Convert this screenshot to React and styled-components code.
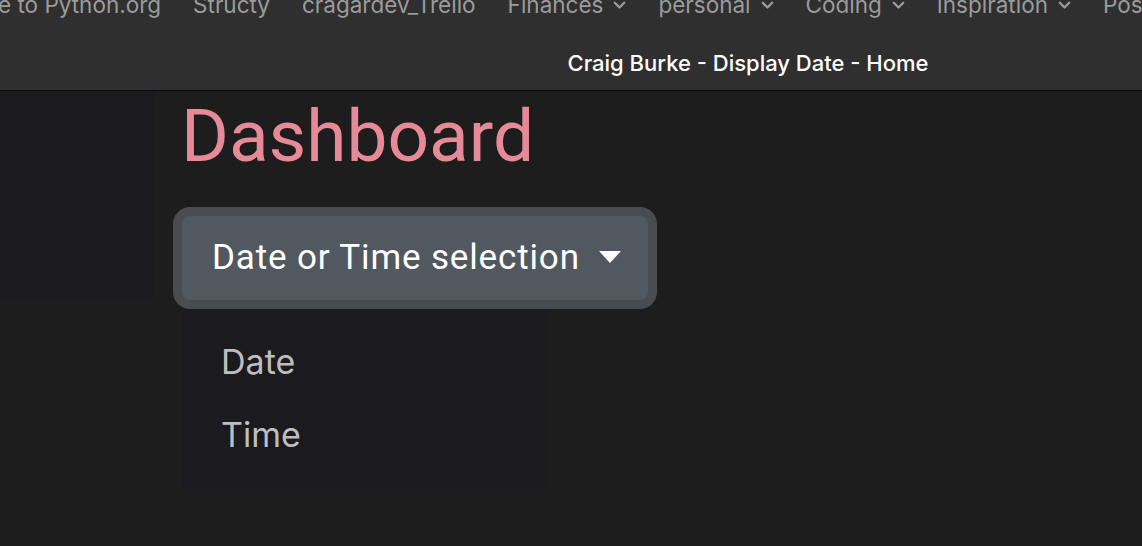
import styled, { createGlobalStyle } from "styled-components";

const GlobalStyle = createGlobalStyle`
  html, body {
    margin: 0;
    padding: 0;
    background: #1d1d1d;
    overflow: hidden;
  }
  * { box-sizing: border-box; }
`;

const Page = styled.div`
  width: 1142px;
  height: 546px;
  background: #1d1d1d;
  overflow: hidden;
`;

const Chrome = styled.header`
  height: 91px;
  background: #2f2f2f;
  border-bottom: 1px solid #0c0c0c;
  overflow: hidden;
`;

const Bookmarks = styled.nav`
  display: flex;
  align-items: center;
  gap: 32px;
  margin-top: -9px;
  margin-left: -2px;
  height: 27px;
  white-space: nowrap;
  font-family: Inter, "Noto Sans", sans-serif;
  font-size: 22.5px;
  line-height: 27px;
  color: #9b9b9b;
`;

const Bookmark = styled.span`
  display: flex;
  align-items: center;
  gap: 10px;
`;

const Chevron = styled.svg`
  width: 13px;
  height: 9px;
  margin-top: 1px;
`;

const TitleRow = styled.div`
  display: flex;
  justify-content: center;
  padding-left: 354px;
  margin-top: 32px;
  font-family: Inter, "Noto Sans", sans-serif;
  font-size: 22px;
  font-weight: 500;
  line-height: 26px;
  color: #ffffff;
`;

const Body = styled.div`
  display: flex;
  align-items: flex-start;
`;

const Sidebar = styled.aside`
  width: 154px;
  height: 209px;
  flex-shrink: 0;
  background: #1b1b1f;
`;

const Main = styled.main`
  padding-left: 28px;
  font-family: Roboto, "Liberation Sans", sans-serif;
`;

const Heading = styled.h1`
  margin: 9px 0 0 -1px;
  font-size: 73px;
  font-weight: 400;
  line-height: 73px;
  color: #e68a97;
`;

const DropdownWrap = styled.div`
  position: relative;
  z-index: 0;
  margin-top: 43px;
`;

const Toggle = styled.button`
  position: relative;
  z-index: 2;
  display: flex;
  align-items: center;
  gap: 19px;
  height: 84px;
  width: 466px;
  padding: 0 29px 0 30px;
  border: none;
  border-radius: 8px;
  background: #525860;
  box-shadow: 0 0 0 9px #494c51;
  color: #ffffff;
  font-family: Roboto, "Liberation Sans", sans-serif;
  font-size: 35px;
  letter-spacing: 0.85px;
  line-height: 40px;
  white-space: nowrap;
`;

const Caret = styled.span`
  width: 0;
  height: 0;
  margin-left: auto;
  margin-top: -2px;
  border-top: 12px solid #ffffff;
  border-left: 11px solid transparent;
  border-right: 11px solid transparent;
`;

const Menu = styled.ul`
  position: absolute;
  top: 91px;
  left: 0;
  z-index: 1;
  width: 366px;
  margin: 0;
  padding: 18px 0;
  list-style: none;
  background: #1b1b1f;
  border-radius: 8px;
`;

const MenuItem = styled.li`
  padding-left: 39px;
  font-family: Inter, "Noto Sans", sans-serif;
  font-size: 34px;
  line-height: 73px;
  color: #bebebe;
`;

const bookmarks = [
  { label: "e to Python.org" },
  { label: "Structy" },
  { label: "cragardev_Trello" },
  { label: "Finances", menu: true },
  { label: "personal", menu: true },
  { label: "Coding", menu: true },
  { label: "Inspiration", menu: true },
  { label: "Posts" },
];

const App = () => {
  return (
    <Page>
      <GlobalStyle />
      <Chrome>
        <Bookmarks>
          {bookmarks.map((b) => (
            <Bookmark key={b.label}>
              {b.label}
              {b.menu && (
                <Chevron viewBox="0 0 13 9">
                  <path d="M1.8 1.8 L6.5 6.5 L11.2 1.8" fill="none" stroke="#9b9b9b" strokeWidth="2.3" strokeLinecap="round" strokeLinejoin="round" />
                </Chevron>
              )}
            </Bookmark>
          ))}
        </Bookmarks>
        <TitleRow>Craig Burke - Display Date - Home</TitleRow>
      </Chrome>
      <Body>
        <Sidebar />
        <Main>
          <Heading>Dashboard</Heading>
          <DropdownWrap>
            <Toggle>
              Date or Time selection
              <Caret />
            </Toggle>
            <Menu>
              <MenuItem>Date</MenuItem>
              <MenuItem>Time</MenuItem>
            </Menu>
          </DropdownWrap>
        </Main>
      </Body>
    </Page>
  );
};

export default App;
